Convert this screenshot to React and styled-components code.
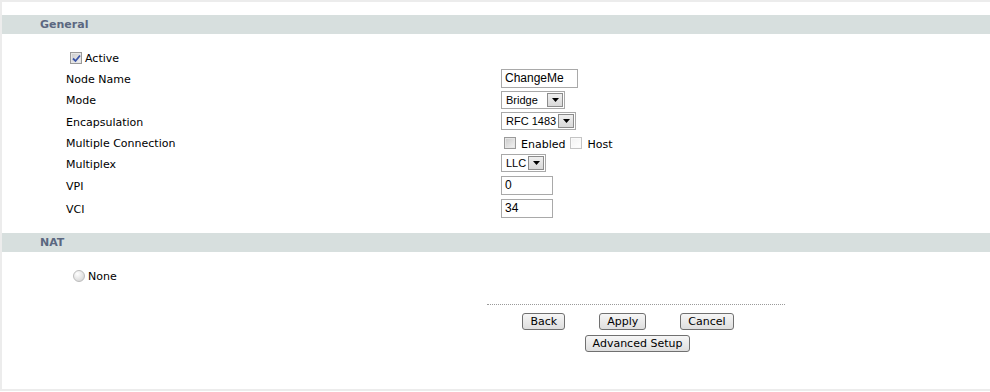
import styled, { createGlobalStyle } from 'styled-components';

const GlobalStyle = createGlobalStyle`
  html, body {
    margin: 0;
    padding: 0;
    background: #ffffff;
  }
  body {
    font-family: "DejaVu Sans", Verdana, sans-serif;
    font-size: 11px;
    color: #000000;
  }
`;

const fields = [
  { label: 'Node Name', h: 22, kind: 'input', value: 'ChangeMe', width: 77 },
  { label: 'Mode', h: 21, kind: 'select', value: 'Bridge', width: 64 },
  { label: 'Encapsulation', h: 22, kind: 'select', value: 'RFC 1483', width: 75 },
  { label: 'Multiple Connection', h: 21, kind: 'multi' },
  { label: 'Multiplex', h: 20, kind: 'select', value: 'LLC', width: 45 },
  { label: 'VPI', h: 24, kind: 'input', value: '0', width: 52 },
  { label: 'VCI', h: 23, kind: 'input', value: '34', width: 52 },
];

function Check({ checked, light }) {
  return (
    <CheckBox $light={light}>
      {checked && (
        <svg width="9" height="9" viewBox="0 0 9 9">
          <path d="M1 4.5 L3.5 7 L8 1.5" fill="none" stroke="#3b55a8" strokeWidth="1.8" />
        </svg>
      )}
    </CheckBox>
  );
}

function Select({ value, width }) {
  return (
    <SelectBox style={{ width }}>
      <SelectText>{value}</SelectText>
      <ArrowButton>
        <svg width="7" height="4" viewBox="0 0 7 4">
          <path d="M0 0 H7 L3.5 4 Z" fill="#000" />
        </svg>
      </ArrowButton>
    </SelectBox>
  );
}

function FieldValue({ f }) {
  if (f.kind === 'input') return <TextBox style={{ width: f.width }}>{f.value}</TextBox>;
  if (f.kind === 'select') return <Select value={f.value} width={f.width} />;
  return (
    <Inline>
      <Check />
      <OptText>Enabled</OptText>
      <Check light />
      <OptText>Host</OptText>
    </Inline>
  );
}

export default function App() {
  return (
    <>
      <GlobalStyle />
      <Frame>
        <SectionBar>General</SectionBar>
        <Form>
          <CheckRow>
            <Check checked />
            <span>Active</span>
          </CheckRow>
          {fields.map((f) => (
            <Row key={f.label} $h={f.h}>
              <Label>{f.label}</Label>
              <FieldValue f={f} />
            </Row>
          ))}
        </Form>
        <SectionBar>NAT</SectionBar>
        <NatBlock>
          <CheckRow>
            <Radio />
            <span>None</span>
          </CheckRow>
        </NatBlock>
        <ButtonArea>
          <ButtonRow $shift={4}>
            <Button>Back</Button>
            <Button>Apply</Button>
            <Button>Cancel</Button>
          </ButtonRow>
          <ButtonRow $shift={3} $last>
            <Button>Advanced Setup</Button>
          </ButtonRow>
        </ButtonArea>
      </Frame>
    </>
  );
}

const Frame = styled.div`
  box-sizing: border-box;
  height: 391px;
  border-top: 2px solid #ececec;
  border-left: 2px solid #ececec;
  border-bottom: 2px solid #ececec;
  padding-top: 13px;
`;

const SectionBar = styled.div`
  height: 18px;
  line-height: 18px;
  padding-top: 1px;
  background: #d7dfde;
  padding-left: 38px;
  font-weight: bold;
  font-size: 11px;
  color: #5b6780;
`;

const Form = styled.div`
  padding: 15px 0 13px 64px;
`;

const Row = styled.div`
  display: grid;
  grid-template-columns: 435px 1fr;
  align-items: center;
  height: ${(p) => p.$h}px;
`;

const Label = styled.span`
  padding-top: 2px;
  color: #000;
`;

const CheckRow = styled.div`
  display: flex;
  align-items: center;
  gap: 3px;
  height: 18px;
  padding-left: 4px;
`;

const CheckBox = styled.span`
  box-sizing: border-box;
  width: 12px;
  height: 12px;
  display: inline-flex;
  align-items: center;
  justify-content: center;
  border: 1px solid ${(p) => (p.$light ? '#c4c4c4' : '#9a9a9a')};
  background: ${(p) =>
    p.$light
      ? 'linear-gradient(135deg, #f2f2f2, #ffffff)'
      : 'linear-gradient(135deg, #c9c9c9, #f4f4f4)'};
  box-shadow: inset 0 0 0 1px ${(p) => (p.$light ? '#fafafa' : '#e6e6e6')};
`;

const Radio = styled.span`
  box-sizing: border-box;
  width: 12px;
  height: 12px;
  border-radius: 50%;
  border: 1px solid #bcbcbc;
  background: radial-gradient(circle at 35% 30%, #ffffff, #e2e2e2 60%, #cfcfcf);
`;

const Inline = styled.div`
  display: flex;
  align-items: center;
  padding-left: 3px;
  padding-top: 1px;
`;

const OptText = styled.span`
  margin-left: 5px;
  margin-right: 5px;
  padding-top: 2px;
`;

const TextBox = styled.div`
  box-sizing: border-box;
  height: 19px;
  border: 1px solid #a9a9a9;
  padding: 0 3px;
  line-height: 17px;
  font-family: "Liberation Sans", Arial, sans-serif;
  font-size: 12px;
  color: #000;
`;

const SelectBox = styled.div`
  box-sizing: border-box;
  height: 18px;
  border: 1px solid #a9a9a9;
  display: flex;
  align-items: center;
  justify-content: space-between;
  padding: 0 1px 0 4px;
`;

const SelectText = styled.span`
  font-family: "Liberation Sans", Arial, sans-serif;
  font-size: 11px;
  color: #000;
`;

const ArrowButton = styled.span`
  box-sizing: border-box;
  width: 16px;
  height: 14px;
  display: flex;
  align-items: center;
  justify-content: center;
  border: 1px solid #8c8c8c;
  background: linear-gradient(#efefef, #d9d9d9);
`;

const NatBlock = styled.div`
  padding: 15px 0 0 67px;
`;

const ButtonArea = styled.div`
  margin: 19px 0 0 485px;
  width: 298px;
  border-top: 1px dotted #9a9a9a;
  padding-top: 8px;
  display: flex;
  flex-direction: column;
  gap: 5px;
`;

const ButtonRow = styled.div`
  display: flex;
  justify-content: center;
  gap: 34px;
  padding-left: ${(p) => p.$shift}px;
  padding-right: ${(p) => (p.$last ? '0' : '20px')};
`;

const Button = styled.button`
  box-sizing: border-box;
  height: 17px;
  padding: 0 7px;
  border: 1px solid #707070;
  border-radius: 3px;
  background: linear-gradient(#f6f6f6, #dedede);
  font-family: "DejaVu Sans", Verdana, sans-serif;
  font-size: 11px;
  line-height: 15px;
  color: #000;
`;
